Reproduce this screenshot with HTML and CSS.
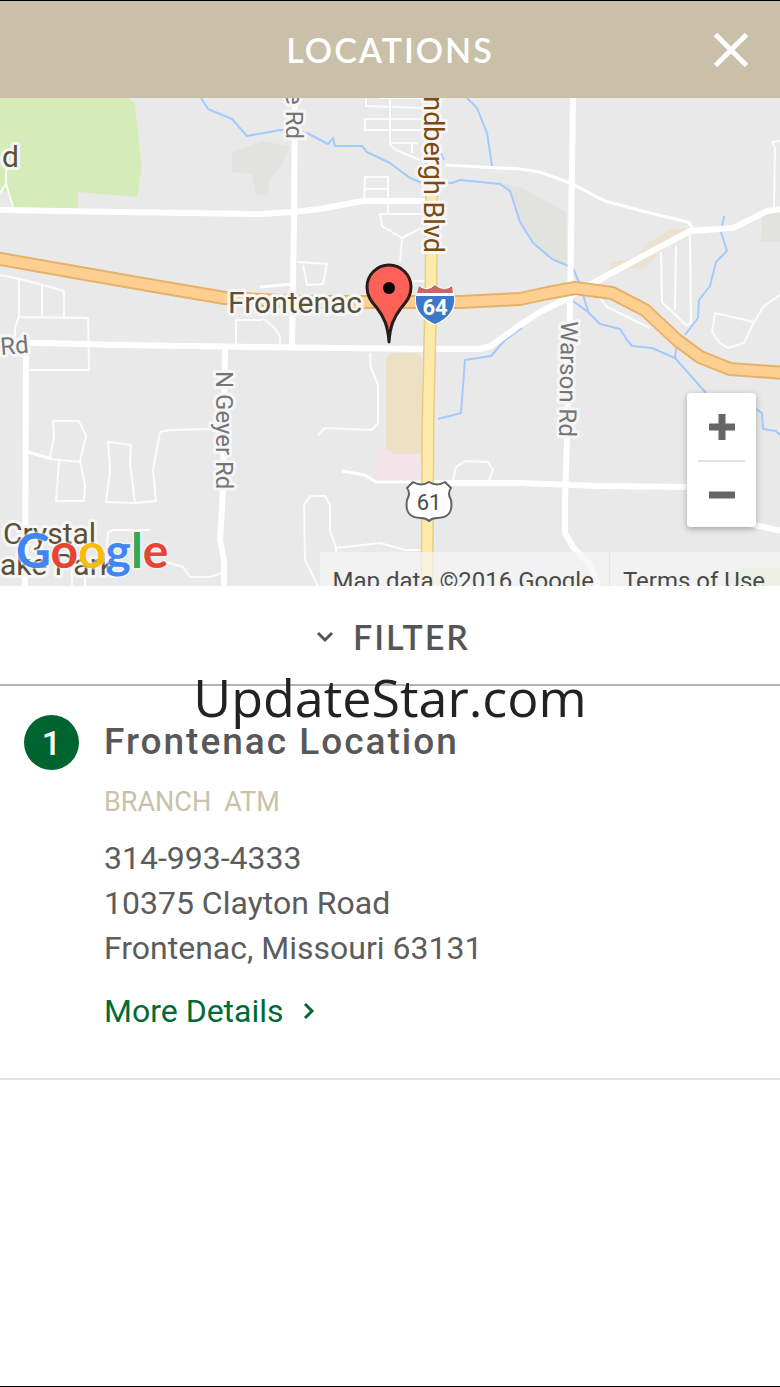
FILE: index.html
```html
<!DOCTYPE html>
<html lang="en">
<head>
<meta charset="utf-8">
<meta name="viewport" content="width=device-width, initial-scale=1">
<title>Locations</title>
<link rel="stylesheet" href="styles.css">
</head>
<body class="page">
<header class="topbar">
  <h1 class="topbar-title">LOCATIONS</h1>
  <button class="close" type="button" aria-label="Close">
    <svg width="36" height="36" viewBox="0 0 36 36" aria-hidden="true"><path d="M2.5 2.5 33.5 33.5M33.5 2.5 2.5 33.5" fill="none" stroke="#fff" stroke-width="5"/></svg>
  </button>
</header>

<section class="map" aria-label="Map">
  <svg class="map-canvas" viewBox="0 98 780 488" preserveAspectRatio="xMidYMid slice">
    <rect x="0" y="98" width="780" height="488" fill="#e9e9e9"/>
    <!-- land areas -->
    <path d="M0 98H128L135 103 138 135 142 165 137 197 78 192V208H12L7 192 0 190Z" fill="#d6ebba"/>
    <g fill="#e2e3de">
      <path d="M232 152 262 141 290 146 282 165 270 180 268 196 256 194 252 175 232 172Z"/>
      <path d="M497 182 520 187 566 212 567 267 552 260 533 244 520 222 510 191Z"/>
      <path d="M762 212 780 209V242H761Z"/>
    </g>
    <path d="M386 360 391 353H416L422 358V454H392L386 448Z" fill="#ede0c5"/>
    <path d="M378 450H390L393 454H422V480H376Z" fill="#f5e3ea"/>
    <path d="M608 270 612 262 635 258 650 242 668 230 685 228 690 233 660 252 645 268Z" fill="#ebe3cf"/>
    <path d="M728 572 740 568H780V586H728Z" fill="#d6ebba"/>
    <!-- streams -->
    <g fill="none" stroke="#a3caff" stroke-width="2" stroke-linejoin="round">
      <path d="M201 98 208 109 232 119 247 136 280 130 307 133 328 144 333 138 335 146H362L367 152 390 163 410 178 422 183H452L460 180 500 184 510 191 520 222 533 243 552 259 573 268 580 285 588 311"/>
      <path d="M573 301 588 312 600 324 620 329 627 340 632 346 652 348 675 358 706 393M675 358 676 350 680 341"/>
      <path d="M467 98 477 108 487 133 492 166M440 152 444 160"/>
      <path d="M724 216 721 232 727 251 716 262 710 286 699 300 698 318 685 335"/>
      <path d="M522 328 505 340 491 356 465 360 461 413 438 419M756 409 762 413 763 429 776 431 780 435"/>
    </g>
    <!-- side streets -->
    <g fill="none" stroke="#fbfbfb" stroke-width="2" stroke-linejoin="round">
      <path d="M6 168V184L0 193M6 184 13 207M0 275 20 279 43 285 64 291V317M19 279V316L15 328V344M42 285V317M18 317 88 318 89 370H29"/>
      <path d="M366 98V106L422 108M390 98V145L396 150 420 160M422 119H365V130H422M390 143H418M412 144V153M364 201 365 177H388V213M364 189H388M425 214H380L382 226 402 238 421 228M402 238 400 262M298 262 327 264 323 284 307 285 303 265M400 281H425M380 98H422"/>
      <path d="M780 141 772 142 775 148 774 208M690 235 691 323 686 325 662 302 661 252M676 246 675 310M600 298 607 307 650 328M754 322 715 313 712 332 720 343 728 348 744 343 754 322 764 306 780 295"/>
      <path d="M53 421H79L86 436 80 461 85 485 84 501H56L59 461M53 421 54 437 50 457M28 452 50 459 80 462M106 502 110 470 108 442 131 445 130 462 135 503ZM135 503 156 501 153 470 160 432 170 430 210 429M107 548 108 532 113 530H150M166 562 183 567 190 577H210L222 573"/>
      <path d="M370 353 371 368 378 385V423L372 430 325 428 318 435M318 586 305 560 304 505 310 496H325L330 505V530L336 548 380 543 405 550H425M336 548V553M453 480 456 467 465 461 488 462 493 470 489 480M280 346V336L273 326 262 318M236 346V320H262M72 560V586M85 570V586"/>
    </g>
    <path d="M445 165 520 169 540 172 570 183 605 201 650 213 688 222 693 228M342 471 365 475 376 482H430M28 452 52 459M260 287 293 284" fill="none" stroke="#fff" stroke-width="3"/>
    <!-- main streets -->
    <g fill="none" stroke="#fff" stroke-width="6" stroke-linejoin="round">
      <path d="M0 210 120 212 260 214 293 212 320 209 363 201H427"/>
      <path d="M295 98 294 220 292 347M573 98 570 310 567 440 565 500V533L573 547 590 565 598 586"/>
      <path d="M0 342 120 345 260 347 423 349H480L491 346 520 325 540 312 570 297 593 283 660 247 690 231 733 228 767 211 782 209"/>
      <path d="M26 345 25 586M225 348 223 490 220 540 224 560V586"/>
      <path d="M430 483H520L600 486 690 487M750 524 782 531"/>
    </g>
    <!-- highways -->
    <g fill="none" stroke-linejoin="round">
      <path d="M432 98 431 290 428 420 427 590" stroke="#e6cd86" stroke-width="13"/>
      <path d="M432 98 431 290 428 420 427 590" stroke="#fdeaa8" stroke-width="10"/>
      <path d="M-5 258 80 273 160 287 225 298 300 302H460L520 299 548 293 575 288 612 293 645 310 677 340 700 357 730 369 785 373" stroke="#e6b26a" stroke-width="14"/>
      <path d="M-5 258 80 273 160 287 225 298 300 302H460L520 299 548 293 575 288 612 293 645 310 677 340 700 357 730 369 785 373" stroke="#fdd091" stroke-width="10"/>
    </g>
    <!-- labels -->
    <g class="label">
      <text class="place" x="2" y="167">d</text>
      <text class="place" x="228" y="313">Frontenac</text>
      <text class="place" x="3" y="544">Crystal</text>
      <text class="place" x="0" y="575">ake Park</text>
      <text class="road" transform="translate(1 355) rotate(-5)">Rd</text>
      <text class="road" text-anchor="end" transform="translate(286 139) rotate(90)">e Rd</text>
      <text class="road" transform="translate(216 371) rotate(90)">N Geyer Rd</text>
      <text class="road" transform="translate(561 321) rotate(91)">Warson Rd</text>
      <text class="boulevard" text-anchor="end" transform="translate(424 253) rotate(90)">ndbergh Blvd</text>
    </g>
    <!-- interstate shield -->
    <path d="M419 285Q423 289 427 288 432 287 435 284 438 287 443 288 448 289 452 285L455 297Q457 317 435 325 413 317 415 297Z" fill="#fff"/>
    <path d="M419 286Q423 290 428 289 432 288 435 285 438 288 443 289 448 290 452 286L453 293H417Z" fill="#cf6263"/>
    <path d="M416 296H454Q456 315 435 324 414 315 416 296Z" fill="#3b78c9"/>
    <text class="shield shield-interstate" x="435" y="315">64</text>
    <!-- route shield -->
    <path d="M413 482Q421 487 429 482 437 487 445 482L451 488Q447 493 451 500 454 518 437 518 432 518 429 521 426 518 421 518 404 518 407 500 411 493 407 488Z" fill="#fff" stroke="#626262" stroke-width="2" stroke-linejoin="round"/>
    <text class="shield shield-route" x="429" y="510">61</text>
    <!-- pin -->
    <path d="M389 342C388 326 384 317 377 308 370 300 367 295 367 287A22 22 0 0 1 411 287C411 295 408 300 401 308 394 317 390 326 389 342Z" fill="#fe6256" stroke="#2b1b1b" stroke-width="3" stroke-linejoin="round"/>
    <circle cx="389" cy="288" r="6" fill="#080000"/>
    <!-- provider logo -->
    <text class="logo" x="16" y="568"><tspan fill="#4285f4">G</tspan><tspan fill="#ea4335">o</tspan><tspan fill="#fbbc05">o</tspan><tspan fill="#4285f4">g</tspan><tspan fill="#34a853">l</tspan><tspan fill="#ea4335">e</tspan></text>
  </svg>
  <div class="attribution">
    <span class="attribution-item">Map data ©2016 Google</span>
    <a class="attribution-item" href="#terms">Terms of Use</a>
  </div>
  <div class="zoom">
    <button class="zoom-button" type="button" aria-label="Zoom in"><svg width="26" height="26" viewBox="0 0 26 26" aria-hidden="true"><path d="M13 0V26M0 13H26" stroke="#666" stroke-width="7"/></svg></button>
    <button class="zoom-button" type="button" aria-label="Zoom out"><svg width="26" height="26" viewBox="0 0 26 26" aria-hidden="true"><path d="M0 13H26" stroke="#666" stroke-width="7"/></svg></button>
  </div>
</section>

<button class="filter" type="button">
  <svg width="18" height="12" viewBox="0 0 18 12" aria-hidden="true"><path d="M2 2 9 9 16 2" fill="none" stroke="#555" stroke-width="3"/></svg>
  <span>FILTER</span>
</button>

<main class="results">
  <article class="result">
    <span class="result-number">1</span>
    <div class="result-body">
      <h2 class="result-name">Frontenac Location</h2>
      <p class="result-tags"><span>BRANCH</span><span>ATM</span></p>
      <a class="result-line" href="tel:314-993-4333">314-993-4333</a>
      <address class="result-line">10375 Clayton Road<br>Frontenac, Missouri 63131</address>
      <a class="result-more" href="#details">More Details
        <svg width="12" height="18" viewBox="0 0 12 18" aria-hidden="true"><path d="M2 2 9 9 2 16" fill="none" stroke="#006a35" stroke-width="3"/></svg>
      </a>
    </div>
  </article>
</main>
<div class="watermark">UpdateStar.com</div>
</body>
</html>
```
FILE: styles.css
```css
* {
  box-sizing: border-box;
}

.page {
  position: relative;
  min-height: 100vh;
  margin: 0;
  border-top: 1px solid #000;
  border-bottom: 1px solid #000;
  background: #fff;
  color: #58585a;
  font-family: Roboto, sans-serif;
}

.topbar {
  display: grid;
  grid-template-columns: 1fr auto 1fr;
  align-items: center;
  height: 97px;
  padding: 0 31px;
  background: #cabfa8;
}

.topbar-title {
  grid-column: 2;
  margin: 0;
  color: #fff;
  font: 600 34px/40px Lato, sans-serif;
  letter-spacing: 2px;
}

.close {
  display: flex;
  justify-self: end;
  padding: 0;
  border: 0;
  background: none;
}

.map {
  position: relative;
  height: 488px;
  overflow: hidden;
}

.map-canvas {
  display: block;
  width: 100%;
  height: 100%;
}

.label {
  stroke: #f6f6f6;
  stroke-width: 6px;
  stroke-linejoin: round;
  paint-order: stroke;
}

.place {
  fill: #5b5139;
  font-size: 30px;
}

.road {
  fill: #757575;
  font-size: 24px;
}

.boulevard {
  fill: #7d4a12;
  font-size: 27px;
}

.shield {
  font-size: 22px;
  text-anchor: middle;
}

.shield-interstate {
  fill: #fff;
  font-weight: 700;
}

.shield-route {
  fill: #4d4d4d;
}

.logo {
  font: 700 48px Lato, sans-serif;
  stroke: #fff;
  stroke-opacity: 0.5;
  stroke-width: 3px;
  paint-order: stroke;
}

.attribution {
  position: absolute;
  right: 0;
  bottom: 0;
  display: flex;
  height: 34px;
  overflow: hidden;
  background: rgba(245, 245, 245, 0.7);
}

.attribution-item {
  padding: 14px 15px 0 13px;
  color: #4a4a4a;
  font-size: 24px;
  line-height: 30px;
  text-decoration: none;
  white-space: nowrap;
}

.attribution-item + .attribution-item {
  border-left: 1px solid #e4e4e4;
}

.zoom {
  position: absolute;
  top: 295px;
  right: 24px;
  width: 69px;
  padding: 0 11px;
  border-radius: 4px;
  background: #fff;
  box-shadow: 0 2px 6px rgba(0, 0, 0, 0.3);
}

.zoom-button {
  display: flex;
  align-items: center;
  justify-content: center;
  width: 100%;
  height: 67px;
  padding: 0;
  border: 0;
  background: none;
}

.zoom-button + .zoom-button {
  border-top: 2px solid #e2e2e2;
}

.filter {
  display: flex;
  align-items: center;
  justify-content: center;
  gap: 19px;
  width: 100%;
  height: 100px;
  padding: 4px 0 0 6px;
  border: 0;
  border-bottom: 2px solid #b4b4b4;
  background: #fff;
  color: #555;
  font: 600 34px/40px Lato, sans-serif;
  letter-spacing: 2px;
}

.result {
  display: flex;
  align-items: flex-start;
  gap: 25px;
  padding: 29px 24px 47px;
  border-bottom: 2px solid #e2e2e2;
}

.result-number {
  display: flex;
  flex: none;
  align-items: center;
  justify-content: center;
  width: 55px;
  height: 55px;
  border-radius: 50%;
  background: #006430;
  color: #fff;
  font: 500 34px/40px Roboto, sans-serif;
}

.result-name {
  margin: 0;
  padding-top: 5px;
  font-size: 37px;
  font-weight: 500;
  line-height: 44px;
  letter-spacing: 2px;
}

.result-tags {
  display: flex;
  gap: 13px;
  margin: 20px 0 16px;
  color: #c9c1aa;
  font-size: 27px;
  line-height: 36px;
}

.result-line {
  display: block;
  color: #5c5c5c;
  font-size: 32px;
  font-style: normal;
  line-height: 45px;
  text-decoration: none;
}

.result-more {
  display: flex;
  align-items: center;
  gap: 19px;
  margin-top: 20px;
  color: #006a35;
  font-size: 32px;
  line-height: 40px;
  text-decoration: none;
}

.watermark {
  position: absolute;
  top: 658px;
  left: 0;
  width: 100%;
  color: #222;
  font: 400 52px/76px "Open Sans", sans-serif;
  text-align: center;
  pointer-events: none;
}
```
